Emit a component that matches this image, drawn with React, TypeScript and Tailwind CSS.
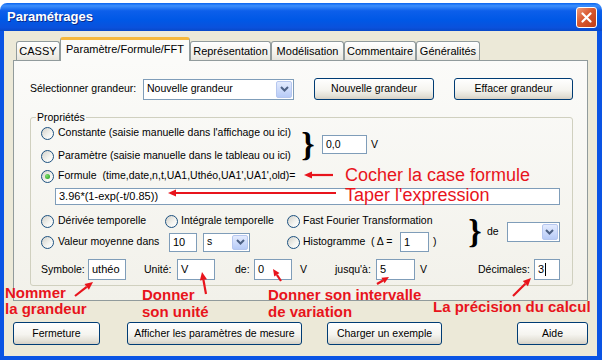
import React from 'react'

type Pt = [number, number]

const RED = '#e8141c'

// red annotation arrow, head drawn at "to"
function Arrow({ from, to, head = 8 }: { from: Pt; to: Pt; head?: number }) {
  const [x1, y1] = from
  const [x2, y2] = to
  const len = Math.hypot(x2 - x1, y2 - y1)
  const ux = (x2 - x1) / len
  const uy = (y2 - y1) / len
  const bx = x2 - ux * head
  const by = y2 - uy * head
  const px = -uy * head * 0.45
  const py = ux * head * 0.45
  return (
    <g>
      <line x1={x1} y1={y1} x2={bx} y2={by} stroke={RED} strokeWidth={2.2} />
      <polygon points={`${x2},${y2} ${bx + px},${by + py} ${bx - px},${by - py}`} fill={RED} />
    </g>
  )
}

function Radio({ checked = false }: { checked?: boolean }) {
  return (
    <span className="flex h-[13px] w-[13px] shrink-0 items-center justify-center rounded-full border border-[#1c5180] bg-[linear-gradient(135deg,#d2d1ca,#f4f4f0_60%,#ffffff)]">
      {checked && <span className="h-[5px] w-[5px] rounded-full bg-[radial-gradient(circle_at_35%_35%,#7ee06a,#1f961f)]" />}
    </span>
  )
}

function Field({ className = '', children }: { className?: string; children?: React.ReactNode }) {
  return (
    <div className={`flex shrink-0 items-center border border-[#7f9db9] bg-white pl-[3px] ${className}`}>
      {children}
    </div>
  )
}

function Combo({ className = '', value }: { className?: string; value: string }) {
  return (
    <div className={`flex shrink-0 items-stretch border border-[#7f9db9] bg-white p-px ${className}`}>
      <span className="flex flex-1 items-center pl-[2px]">{value}</span>
      <span className="flex w-[16px] items-center justify-center rounded-[2px] border border-[#b6c7ef] bg-[linear-gradient(#e3ebfe,#b7cbf7)]">
        <svg width="9" height="6" viewBox="0 0 9 6">
          <path d="M1 1l3.5 3.5L8 1" fill="none" stroke="#4d6185" strokeWidth="2" />
        </svg>
      </span>
    </div>
  )
}

function XpButton({ className = '', children }: { className?: string; children: React.ReactNode }) {
  return (
    <button className={`flex shrink-0 items-center justify-center rounded-[3px] border border-[#003c74] bg-[linear-gradient(#ffffff,#f5f4ef_55%,#e3e0d6_85%,#d6d0c5)] text-[10.5px] text-black ${className}`}>
      {children}
    </button>
  )
}

function Tab({ className = '', children }: { className?: string; children: React.ReactNode }) {
  return (
    <div className={`mb-px flex h-[19px] shrink-0 items-center justify-center rounded-t-[3px] border-x border-t border-[#919b9c] bg-[linear-gradient(#ffffff,#f3f2ed_60%,#e6e4dc)] ${className}`}>
      {children}
    </div>
  )
}

function Brace() {
  return <span className="flex w-[10px] shrink-0 justify-center font-['Liberation_Serif',serif] text-[34px] font-bold leading-none">{'}'}</span>
}

export default function App() {
  return (
    <div className="relative h-[363px] w-[602px] overflow-hidden bg-white pt-[3px] font-['Liberation_Sans',Arial,sans-serif] text-[10.5px] text-black">
      <div className="flex h-[357px] flex-col">
        {/* title bar */}
        <div className="flex h-[28px] shrink-0 items-center justify-between rounded-t-[7px] bg-[linear-gradient(180deg,#0a64f0_0%,#3d8ffc_10%,#0d5fea_28%,#0058e6_60%,#0a51dc_88%,#0848c8_100%)] pl-[7px] pr-[5px]">
          <span className="text-[13px] font-bold text-white [text-shadow:1px_1px_#0a2a8a]">Paramétrages</span>
          <span className="flex h-[21px] w-[21px] items-center justify-center rounded-[3px] border border-white bg-[linear-gradient(135deg,#ef9a78,#d9582f_45%,#c03d17)]">
            <svg width="11" height="11" viewBox="0 0 11 11">
              <path d="M1.5 1.5l8 8M9.5 1.5l-8 8" stroke="#fff" strokeWidth="2.2" strokeLinecap="round" />
            </svg>
          </span>
        </div>

        {/* window body */}
        <div className="flex flex-1 flex-col border-b-4 border-l-4 border-r-[5px] border-[#0a54e4] bg-[#ece9d8] px-[9px] pt-[6px]">
          {/* tabs */}
          <div className="relative z-10 -mb-px flex h-[24px] items-end pl-[3px] text-[11px]">
            <Tab className="w-[44px]">CASSY</Tab>
            <div className="flex h-[24px] w-[130px] shrink-0 items-center justify-center rounded-t-[3px] border-x border-t-[3px] border-x-[#919b9c] border-t-[#f5b83d] bg-[#fbfbf9] pb-[2px]">
              Paramètre/Formule/FFT
            </div>
            <Tab className="w-[81px]">Représentation</Tab>
            <Tab className="w-[73px]">Modélisation</Tab>
            <Tab className="w-[72px]">Commentaire</Tab>
            <Tab className="w-[64px]">Généralités</Tab>
          </div>

          {/* tab page */}
          <div className="flex h-[241px] flex-col border border-[#919b9c] bg-[linear-gradient(#fbfbf9,#f2f1ea)]">
            <div className="mt-[17px] flex h-[22px] items-center pl-[16px]">
              <span className="w-[113px]">Sélectionner grandeur:</span>
              <Combo className="h-[21px] w-[151px]" value="Nouvelle grandeur" />
              <XpButton className="ml-[20px] h-[22px] w-[120px]">Nouvelle grandeur</XpButton>
              <XpButton className="ml-[20px] h-[22px] w-[119px]">Effacer grandeur</XpButton>
            </div>

            <fieldset className="ml-[16px] mt-[11px] w-[543px] rounded-[3px] border border-[#d0d0bf] pb-[4px]">
              <legend className="ml-[5px] px-[1px] leading-[13px]">Propriétés</legend>
              <div className="flex flex-col pl-[10px]">
                {/* constante / parametre */}
                <div className="-mt-px flex items-center">
                  <div className="flex w-[262px] flex-col gap-[3px]">
                    <div className="flex h-[20px] items-center gap-[4px]">
                      <Radio />
                      <span>Constante (saisie manuelle dans l'affichage ou ici)</span>
                    </div>
                    <div className="flex h-[20px] items-center gap-[4px]">
                      <Radio />
                      <span>Paramètre (saisie manuelle dans le tableau ou ici)</span>
                    </div>
                  </div>
                  <Brace />
                  <Field className="ml-[9px] h-[19px] w-[45px]">0,0</Field>
                  <span className="ml-[4px]">V</span>
                </div>

                {/* formule */}
                <div className="flex h-[20px] items-center">
                  <Radio checked />
                  <span className="ml-[4px]">Formule</span>
                  <span className="ml-[6px]">(time,date,n,t,UA1,Uthéo,UA1',UA1',old)=</span>
                </div>
                <Field className="ml-[14px] mt-[2px] h-[17px] w-[505px] text-[11px]">3.96*(1-exp(-t/0.85))</Field>

                {/* derivee / valeur moyenne */}
                <div className="mt-[6px] flex items-center">
                  <div className="flex w-[429px] flex-col gap-px">
                    <div className="flex h-[20px] items-center">
                      <div className="flex w-[124px] items-center gap-[4px]">
                        <Radio />
                        <span>Dérivée temporelle</span>
                      </div>
                      <div className="flex w-[122px] items-center gap-[3px]">
                        <Radio />
                        <span>Intégrale temporelle</span>
                      </div>
                      <div className="flex items-center gap-[3px]">
                        <Radio />
                        <span>Fast Fourier Transformation</span>
                      </div>
                    </div>
                    <div className="flex h-[20px] items-center">
                      <div className="flex w-[246px] items-center">
                        <Radio />
                        <span className="ml-[4px] w-[111px]">Valeur moyenne dans</span>
                        <Field className="h-[19px] w-[28px] text-[11px]">10</Field>
                        <Combo className="ml-[6px] h-[19px] w-[47px]" value="s" />
                      </div>
                      <Radio />
                      <span className="ml-[3px] w-[68px]">Histogramme</span>
                      <span className="w-[29px]">( Δ =</span>
                      <Field className="h-[20px] w-[29px] text-[11px]">1</Field>
                      <span className="ml-[4px]">)</span>
                    </div>
                  </div>
                  <Brace />
                  <span className="ml-[7px]">de</span>
                  <Combo className="ml-[8px] h-[20px] w-[53px]" value="" />
                </div>

                {/* symbole row */}
                <div className="mt-[6px] flex h-[23px] items-center">
                  <span className="w-[47px]">Symbole:</span>
                  <Field className="h-[21px] w-[38px] text-[11px]">uthéo</Field>
                  <span className="ml-[18px] w-[33px]">Unité:</span>
                  <Field className="h-[21px] w-[38px] text-[11px]">V</Field>
                  <span className="ml-[20px] w-[19px]">de:</span>
                  <Field className="h-[21px] w-[38px] text-[11px]">0</Field>
                  <span className="ml-[8px] w-[35px]">V</span>
                  <span className="w-[41px]">jusqu'à:</span>
                  <Field className="h-[21px] w-[39px] text-[11px]">5</Field>
                  <span className="ml-[5px] w-[58px]">V</span>
                  <span className="w-[56px]">Décimales:</span>
                  <Field className="h-[21px] w-[26px] text-[11px]">
                    3<span className="ml-px h-[13px] w-px bg-black" />
                  </Field>
                </div>
              </div>
            </fieldset>
          </div>

          {/* bottom buttons */}
          <div className="mt-[21px] flex h-[23px] items-center">
            <XpButton className="h-[23px] w-[87px]">Fermeture</XpButton>
            <XpButton className="ml-[27px] h-[23px] w-[175px]">Afficher les paramètres de mesure</XpButton>
            <XpButton className="ml-[25px] h-[23px] w-[115px]">Charger un exemple</XpButton>
            <XpButton className="ml-auto h-[23px] w-[71px]">Aide</XpButton>
          </div>
        </div>
      </div>

      {/* red annotations drawn over the dialog */}
      <div className="pointer-events-none absolute inset-0 text-[#e8141c]">
        <span className="absolute left-[345px] top-[166px] text-[18px] leading-none">Cocher la case formule</span>
        <span className="absolute left-[345px] top-[186px] text-[18px] leading-none">Taper l'expression</span>
        <span className="absolute left-[5px] top-[285px] text-[15px] font-bold leading-[15px]">Nommer</span>
        <span className="absolute left-[5px] top-[301px] text-[15px] font-bold leading-[15px]">la grandeur</span>
        <div className="absolute left-[142px] top-[286px] text-[15px] font-bold leading-[17px]">
          Donner<br />son unité
        </div>
        <div className="absolute left-[268px] top-[286px] text-[15px] font-bold leading-[17px]">
          Donner son intervalle<br />de variation
        </div>
        <span className="absolute left-[433px] top-[299px] text-[15px] font-bold leading-[15px]">La précision du calcul</span>
        <svg className="absolute left-0 top-0" width="602" height="363">
          <Arrow from={[333, 175]} to={[304, 175]} />
          <Arrow from={[336, 193]} to={[168, 193]} />
          <Arrow from={[75, 296]} to={[93, 282]} />
          <Arrow from={[206, 294]} to={[202, 272]} />
          <Arrow from={[281, 281]} to={[273, 269]} head={7} />
          <Arrow from={[377, 284]} to={[389, 277]} head={7} />
          <Arrow from={[513, 296]} to={[531, 278]} />
        </svg>
      </div>
    </div>
  )
}
